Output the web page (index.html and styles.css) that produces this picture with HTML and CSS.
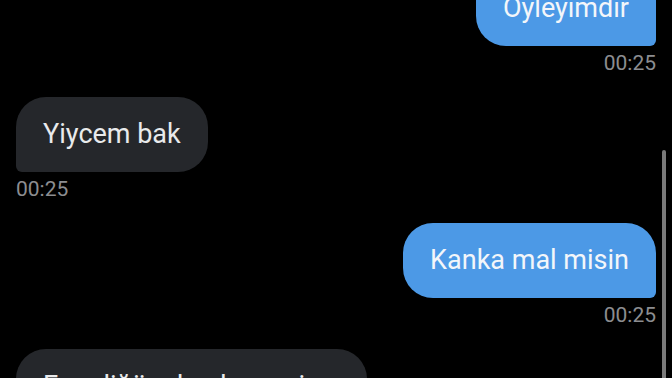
FILE: index.html
```html
<!DOCTYPE html>
<html lang="tr">
<head>
<meta charset="utf-8">
<link rel="stylesheet" href="styles.css">
</head>
<body>
<div class="chat">
  <div class="msg out first">
    <div class="bubble">Öyleyimdir</div>
    <div class="time">00:25</div>
  </div>
  <div class="msg in">
    <div class="bubble">Yiycem bak</div>
    <div class="time">00:25</div>
  </div>
  <div class="msg out">
    <div class="bubble">Kanka mal misin</div>
    <div class="time">00:25</div>
  </div>
  <div class="msg in">
    <div class="bubble wide">Ezerdiğüm kanka seni</div>
  </div>
</div>
<div class="scrollbar"></div>
</body>
</html>
```
FILE: styles.css
```css
html, body {
  margin: 0;
  padding: 0;
  background: #000;
  width: 672px;
  height: 378px;
  overflow: hidden;
}
body {
  position: relative;
  font-family: Roboto, "Noto Sans", sans-serif;
}
.chat {
  display: flex;
  flex-direction: column;
  gap: 23px;
  padding: 0 16px;
  margin-top: -29px;
}
.msg {
  display: flex;
  flex-direction: column;
}
.msg.out {
  align-items: flex-end;
}
.msg.in {
  align-items: flex-start;
}
.bubble {
  height: 75px;
  line-height: 75px;
  padding: 0 27px;
  font-size: 27px;
  white-space: nowrap;
  box-sizing: border-box;
}
.out .bubble {
  background: #4c99e6;
  color: #f3f6fa;
  border-radius: 30px 30px 6px 30px;
}
.in .bubble {
  background: #25272b;
  color: #e9eaec;
  border-radius: 30px 30px 30px 6px;
}
.bubble.wide {
  width: 351px;
}
.time {
  margin-top: 6px;
  height: 22px;
  line-height: 22px;
  font-size: 21px;
  color: #8c8d90;
}
.scrollbar {
  position: absolute;
  right: 6px;
  top: 150px;
  width: 4px;
  height: 240px;
  border-radius: 2px;
  background: #7a7a7a;
}
```
